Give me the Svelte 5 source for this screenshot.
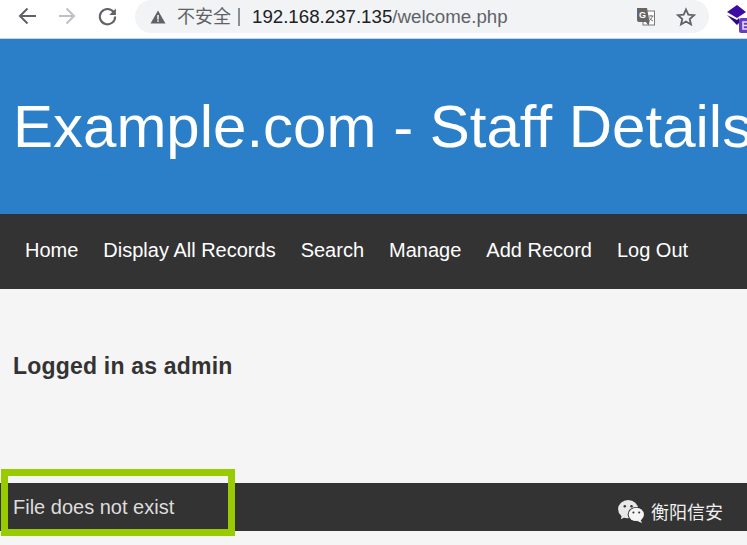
<script>
  const links = ["Home", "Display All Records", "Search", "Manage", "Add Record", "Log Out"];
</script>

<div class="page">
  <div class="toolbar">
    <svg class="tool" viewBox="0 0 22 22"><path d="M20 11H5M11.500 3.500 4 11l7.500 7.500" fill="none" stroke="#5f6368" stroke-width="2"/></svg>
    <svg class="tool" viewBox="0 0 22 22"><path d="M3 11h15M10.500 3.500 18 11l-7.500 7.500" fill="none" stroke="#bdc1c6" stroke-width="2"/></svg>
    <svg class="tool reload" viewBox="0 0 22 22"><path d="M17.500 6.500A8 8 0 1 0 19 11" fill="none" stroke="#5f6368" stroke-width="2.200"/><path d="M19.800 2.500v7h-7z" fill="#5f6368"/></svg>
    <div class="omnibox">
      <svg class="warn" viewBox="0 0 16 16"><path d="M8 1.500 15.500 14.500H.5z" fill="#5f6368"/><path d="M7.200 6h1.600v4.500H7.200zM7.200 11.300h1.600v1.500H7.200z" fill="#f1f3f4"/></svg>
      <span class="insecure">不安全</span>
      <span class="sep"></span>
      <span class="url">192.168.237.135<span class="path">/welcome.php</span></span>
      <svg class="translate" viewBox="0 0 18 18">
        <rect x="6" y="3" width="11.500" height="14" fill="#fff" stroke="#777" stroke-width="1"/>
        <path d="M0 0h10l2.500 14H2a2 2 0 0 1-2-2z" fill="#666"/>
        <path d="M8 13l3.500 4.500 1-3.500z" fill="#666"/>
        <text x="2" y="10" class="g">G</text>
        <path d="M11.500 8h5M14 7v1M15.500 8c-.5 2-2 4-4 5M12.500 9.500c.5 1.500 2 3 3.500 3.500" fill="none" stroke="#666" stroke-width=".9"/>
      </svg>
      <svg class="star" viewBox="0 0 20 20"><path d="M10 2.500l2.300 5.200 5.700.5-4.300 3.800 1.300 5.500-5-3-5 3 1.300-5.500L2 8.200l5.700-.5z" fill="none" stroke="#5f6368" stroke-width="1.800"/></svg>
    </div>
    <svg class="ext" viewBox="0 0 24 30">
      <path d="M11 1 20 8 11 14 1 8z" fill="#3a0ca3"/>
      <path d="M1 11l10 10 2-2v-5l-2 2z" fill="#2a0a80"/>
      <rect x="13" y="14" width="12" height="15" rx="2" fill="#6a3cc4"/>
      <path d="M22 18h-5v7h5M17 21.500h5" stroke="#e8e0f8" stroke-width="1.500" fill="none"/>
    </svg>
  </div>

  <header class="banner"><h1>Example.com - Staff Details</h1></header>

  <nav>
    {#each links as link}
      <a href="#top">{link}</a>
    {/each}
  </nav>

  <main>
    <h3>Logged in as admin</h3>
  </main>

  <footer>
    <span class="message">File does not exist</span>
    <span class="mark">
      <svg class="wechat" viewBox="0 0 30 26">
        <ellipse cx="11.500" cy="10.500" rx="10.500" ry="9.500" fill="#e8e8e8"/>
        <path d="M5 16l-1 5 6-3z" fill="#e8e8e8"/>
        <ellipse cx="20" cy="16" rx="9" ry="7.800" fill="#333"/>
        <ellipse cx="20" cy="16" rx="8" ry="7" fill="#f4f4f4"/>
        <path d="M24 21l2 4-5-2z" fill="#f4f4f4"/>
        <circle cx="8" cy="7.500" r="1.300" fill="#333"/>
        <circle cx="15" cy="7.500" r="1.300" fill="#333"/>
        <circle cx="17" cy="14" r="1.100" fill="#333"/>
        <circle cx="23" cy="14" r="1.100" fill="#333"/>
      </svg>
      <span>衡阳信安</span>
    </span>
  </footer>

  <div class="highlight"></div>
</div>

<style>
  :global(body) {
    margin: 0;
    background: #f5f5f5;
  }

  .page {
    position: relative;
    height: 545px;
    overflow: hidden;
    font-family: "Liberation Sans", Arial, sans-serif;
    background: #f5f5f5;
  }

  .toolbar {
    height: 38px;
    background: #fff;
    border-bottom: 1px solid #d0d3d6;
    display: flex;
    align-items: center;
    padding-left: 16px;
    box-sizing: content-box;
  }

  .tool {
    width: 22px;
    height: 22px;
    margin-right: 18px;
    flex: none;
    position: relative;
    top: -3px;
  }

  .reload {
    width: 21px;
    height: 21px;
    margin: 0 18px 0 1px;
  }

  .omnibox {
    width: 574px;
    height: 33px;
    margin-left: -1px;
    margin-top: -5px;
    background: #f1f3f4;
    border-radius: 17px;
    display: flex;
    align-items: center;
    padding-left: 15px;
    box-sizing: border-box;
    flex: none;
  }

  .warn {
    width: 16px;
    height: 16px;
    flex: none;
  }

  .insecure {
    font-family: "Noto Sans CJK SC", sans-serif;
    font-size: 18px;
    line-height: 20px;
    color: #5f6368;
    margin: -3px 0 0 11px;
  }

  .sep {
    width: 2px;
    height: 18px;
    background: #8a8d91;
    margin: 0 12px 0 7px;
  }

  .url {
    font-size: 18.7px;
    color: #202124;
    white-space: nowrap;
  }

  .path {
    color: #5f6368;
  }

  .translate {
    width: 18px;
    height: 18px;
    margin-left: auto;
    flex: none;
  }

  .g {
    font-size: 9px;
    font-weight: bold;
    fill: #fff;
  }

  .star {
    width: 20px;
    height: 20px;
    margin: 0 13px 0 21px;
    flex: none;
  }

  .ext {
    width: 24px;
    height: 30px;
    flex: none;
    margin-left: 17px;
  }

  .banner {
    height: 175px;
    background: #2b7fc8;
    display: flex;
    align-items: center;
    padding-left: 13px;
    overflow: hidden;
  }

  h1 {
    margin: 0;
    font-size: 60px;
    font-weight: normal;
    color: #fff;
    white-space: nowrap;
  }

  nav {
    height: 75px;
    background: #333;
    display: flex;
    align-items: center;
    padding: 0 0 2px 25px;
    box-sizing: border-box;
    gap: 25px;
  }

  nav a {
    color: #fff;
    font-size: 20px;
    text-decoration: none;
    white-space: nowrap;
  }

  main {
    height: 194px;
    padding: 64px 13px 0;
    box-sizing: border-box;
  }

  h3 {
    margin: 0;
    font-size: 23px;
    font-weight: bold;
    letter-spacing: 0.2px;
    color: #333;
  }

  footer {
    height: 48px;
    background: #333;
    display: flex;
    align-items: center;
    justify-content: space-between;
    padding: 0 24px 0 13px;
    color: #ddd;
  }

  .message {
    font-size: 20px;
  }

  .mark {
    display: flex;
    align-items: center;
    gap: 5px;
    color: #f0f0f0;
    font-family: "Noto Sans CJK SC", sans-serif;
    font-size: 18px;
    padding-top: 8px;
  }

  .wechat {
    width: 29px;
    height: 25px;
  }

  .highlight {
    position: absolute;
    left: 1px;
    top: 469px;
    width: 234px;
    height: 67px;
    border: 7px solid #99cc00;
    box-sizing: border-box;
  }
</style>
